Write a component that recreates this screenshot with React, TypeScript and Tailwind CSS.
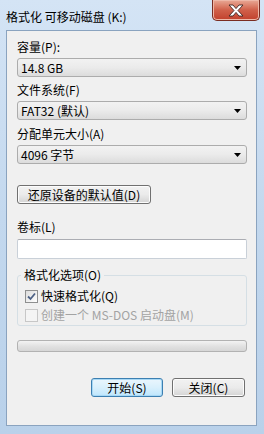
import React from "react";

const font = { fontFamily: '"Noto Sans CJK SC", "Noto Sans", sans-serif' };

function Combo({ value }: { value: string }) {
  return (
    <div className="flex h-[19px] w-[230px] items-center justify-between rounded-[3px] border border-[#acacac] bg-gradient-to-b from-[#f2f2f2] via-[#ebebeb] to-[#dcdcdc] pl-[3px] pr-[5px]">
      <span className="text-[12px] leading-[14px] text-black">{value}</span>
      <svg width="7" height="4" viewBox="0 0 7 4">
        <path d="M0 0h7L3.5 4z" fill="#000" />
      </svg>
    </div>
  );
}

function Label({ children, className = "" }: { children: React.ReactNode; className?: string }) {
  return <div className={`h-[14px] text-[12px] leading-[14px] text-black ${className}`}>{children}</div>;
}

function WinButton({ children, primary = false, className = "" }: { children: React.ReactNode; primary?: boolean; className?: string }) {
  return (
    <div
      className={`flex h-[19px] items-center justify-center rounded-[3px] border text-[12px] leading-[14px] text-black ${
        primary
          ? "border-[#3c7fb1] bg-gradient-to-b from-[#eaf6fd] via-[#d9f0fc] to-[#bee6fd] shadow-[inset_0_0_0_1px_#a7d8f5]"
          : "border-[#707070] bg-gradient-to-b from-[#f2f2f2] via-[#ebebeb] to-[#d4d4d4] shadow-[inset_0_0_0_1px_#fcfcfc]"
      } ${className}`}
    >
      {children}
    </div>
  );
}

export default function App() {
  return (
    <div
      style={font}
      className="relative h-[434px] w-[264px] overflow-hidden bg-gradient-to-b from-[#d4e4f5] via-[#c3d8ee] to-[#b9d1ea]"
    >
      {/* title bar */}
      <div className="flex h-[30px] items-start">
        <div className="pl-[6px] pt-[10px] text-[12px] leading-[14px] text-black">格式化 可移动磁盘 (K:)</div>
        <div className="ml-auto mr-[4px] flex h-[21px] w-[48px] items-center justify-center rounded-b-[5px] border border-t-0 border-[#7a2d22] bg-gradient-to-b from-[#e8a996] via-[#d0604a] to-[#c1402c] shadow-[inset_0_0_0_1px_#eeb8a8]">
          <svg width="18" height="13" viewBox="0 0 18 13">
            <path d="M2 1h4l3 3.6L12 1h4l-5 5.5 5 5.5h-4l-3-3.6L6 12H2l5-5.5z" fill="#fff" stroke="#3d2622" strokeWidth="0.9" strokeLinejoin="round" />
          </svg>
        </div>
      </div>

      {/* client area */}
      <div className="ml-[6px] h-[396px] w-[251px] border border-[#8aa3bf] bg-[#f0f0f0] px-[10px] pt-[9px]">
        <Label>容量(P):</Label>
        <div className="mt-[4px]">
          <Combo value="14.8 GB" />
        </div>
        <Label className="mt-[6px]">文件系统(F)</Label>
        <div className="mt-[4px]">
          <Combo value="FAT32 (默认)" />
        </div>
        <Label className="mt-[7px]">分配单元大小(A)</Label>
        <div className="mt-[4px]">
          <Combo value="4096 字节" />
        </div>

        <WinButton className="mt-[21px] w-[134px]">还原设备的默认值(D)</WinButton>

        <Label className="mt-[16px]">卷标(L)</Label>
        <div className="mt-[5px] h-[20px] w-[230px] rounded-[2px] border border-[#c9d0d8] border-t-[#abadb3] bg-white" />

        {/* group box */}
        <div className="relative mt-[16px] h-[51px] w-[230px] rounded-[3px] border border-[#d5dfe5]">
          <div className="absolute -top-[8px] left-[3px] bg-[#f0f0f0] px-[3px] text-[12px] leading-[14px] text-black">格式化选项(O)</div>
          <div className="flex flex-col gap-[5px] pl-[7px] pt-[13px]">
            <div className="flex items-center gap-[3px]">
              <div className="flex h-[13px] w-[13px] items-center justify-center border border-[#8e8f8f] bg-gradient-to-br from-[#dcdcdc] to-[#ffffff]">
                <svg width="9" height="9" viewBox="0 0 9 9">
                  <path d="M1 4.5l2.5 2.5L8 1.5" fill="none" stroke="#4d6185" strokeWidth="1.8" />
                </svg>
              </div>
              <span className="text-[12px] leading-[14px] text-black">快速格式化(Q)</span>
            </div>
            <div className="flex items-center gap-[3px]">
              <div className="h-[13px] w-[13px] border border-[#c7c7c7] bg-[#f4f4f4]" />
              <span className="text-[12px] leading-[14px] text-[#a3a3a3]">创建一个 MS-DOS 启动盘(M)</span>
            </div>
          </div>
        </div>

        {/* progress */}
        <div className="mt-[14px] h-[12px] w-[230px] rounded-[3px] border border-[#b2b2b2] bg-gradient-to-b from-[#f3f3f3] via-[#e2e2e2] to-[#d6d6d6]" />

        <div className="mt-[26px] flex justify-end gap-[9px] pr-[1px]">
          <WinButton primary className="w-[72px]">开始(S)</WinButton>
          <WinButton className="w-[73px]">关闭(C)</WinButton>
        </div>
      </div>
    </div>
  );
}
